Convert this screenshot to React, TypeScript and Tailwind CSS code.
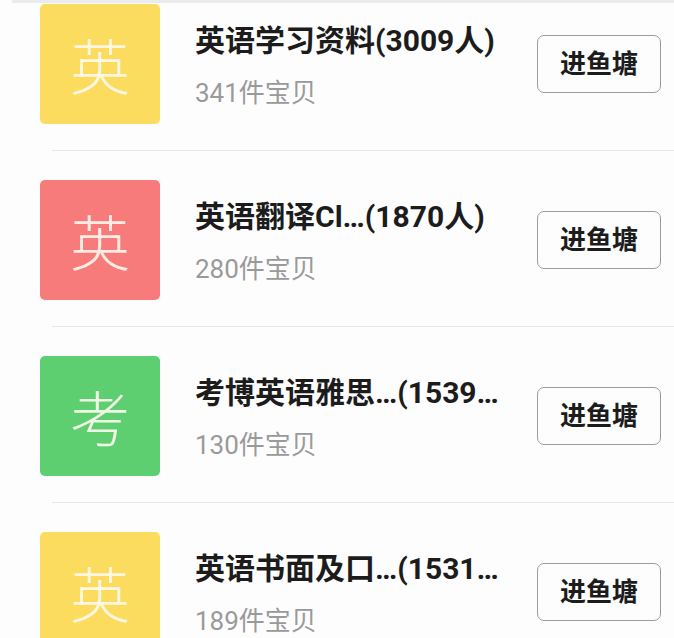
import React from "react";

const rows = [
  { ch: "英", color: "bg-[#fbdc5f]", title: "英语学习资料(3009人)", sub: "341件宝贝" },
  { ch: "英", color: "bg-[#f77b7b]", title: "英语翻译Cl…(1870人)", sub: "280件宝贝" },
  { ch: "考", color: "bg-[#5ecf71]", title: "考博英语雅思…(1539…", sub: "130件宝贝" },
  { ch: "英", color: "bg-[#fbdc5f]", title: "英语书面及口…(1531…", sub: "189件宝贝" },
];

export default function App() {
  return (
    <div
      className="w-[674px] h-[638px] overflow-hidden bg-[#fdfdfe]"
      style={{ fontFamily: '"Roboto", "Noto Sans CJK SC", sans-serif' }}
    >
      <div className="ml-[12px] h-[3px] bg-[#ebebed]" />
      {rows.map((r, i) => (
        <div key={i}>
          {i > 0 && <div className="ml-[52px] h-px bg-[#e6e6e8]" />}
          <div
            className={`flex items-center pl-[40px] pr-[13px] ${
              i === 0 ? "pt-[1px] pb-[26px]" : "pt-[29px] pb-[26px]"
            }`}
          >
            <div
              className={`w-[120px] h-[120px] shrink-0 rounded-[5px] ${r.color} flex items-center justify-center`}
            >
              <span
                className="text-[60px] leading-none font-light text-[#fffaf0]/90"
                style={{ fontFamily: '"Noto Sans CJK SC", sans-serif' }}
              >
                {r.ch}
              </span>
            </div>
            <div className="flex-1 ml-[35px] mt-[4px] flex flex-col">
              <div className="text-[30px] leading-[30px] font-bold text-[#1c1c1c] whitespace-nowrap">
                {r.title}
              </div>
              <div className="mt-[24px] text-[26px] leading-[26px] text-[#9a9a9a] whitespace-nowrap">
                {r.sub}
              </div>
            </div>
            <div className="w-[124px] h-[58px] shrink-0 rounded-[7px] border border-[#9c9c9c] flex items-center justify-center">
              <span className="text-[26px] font-bold text-[#1c1c1c] leading-none">进鱼塘</span>
            </div>
          </div>
        </div>
      ))}
    </div>
  );
}
